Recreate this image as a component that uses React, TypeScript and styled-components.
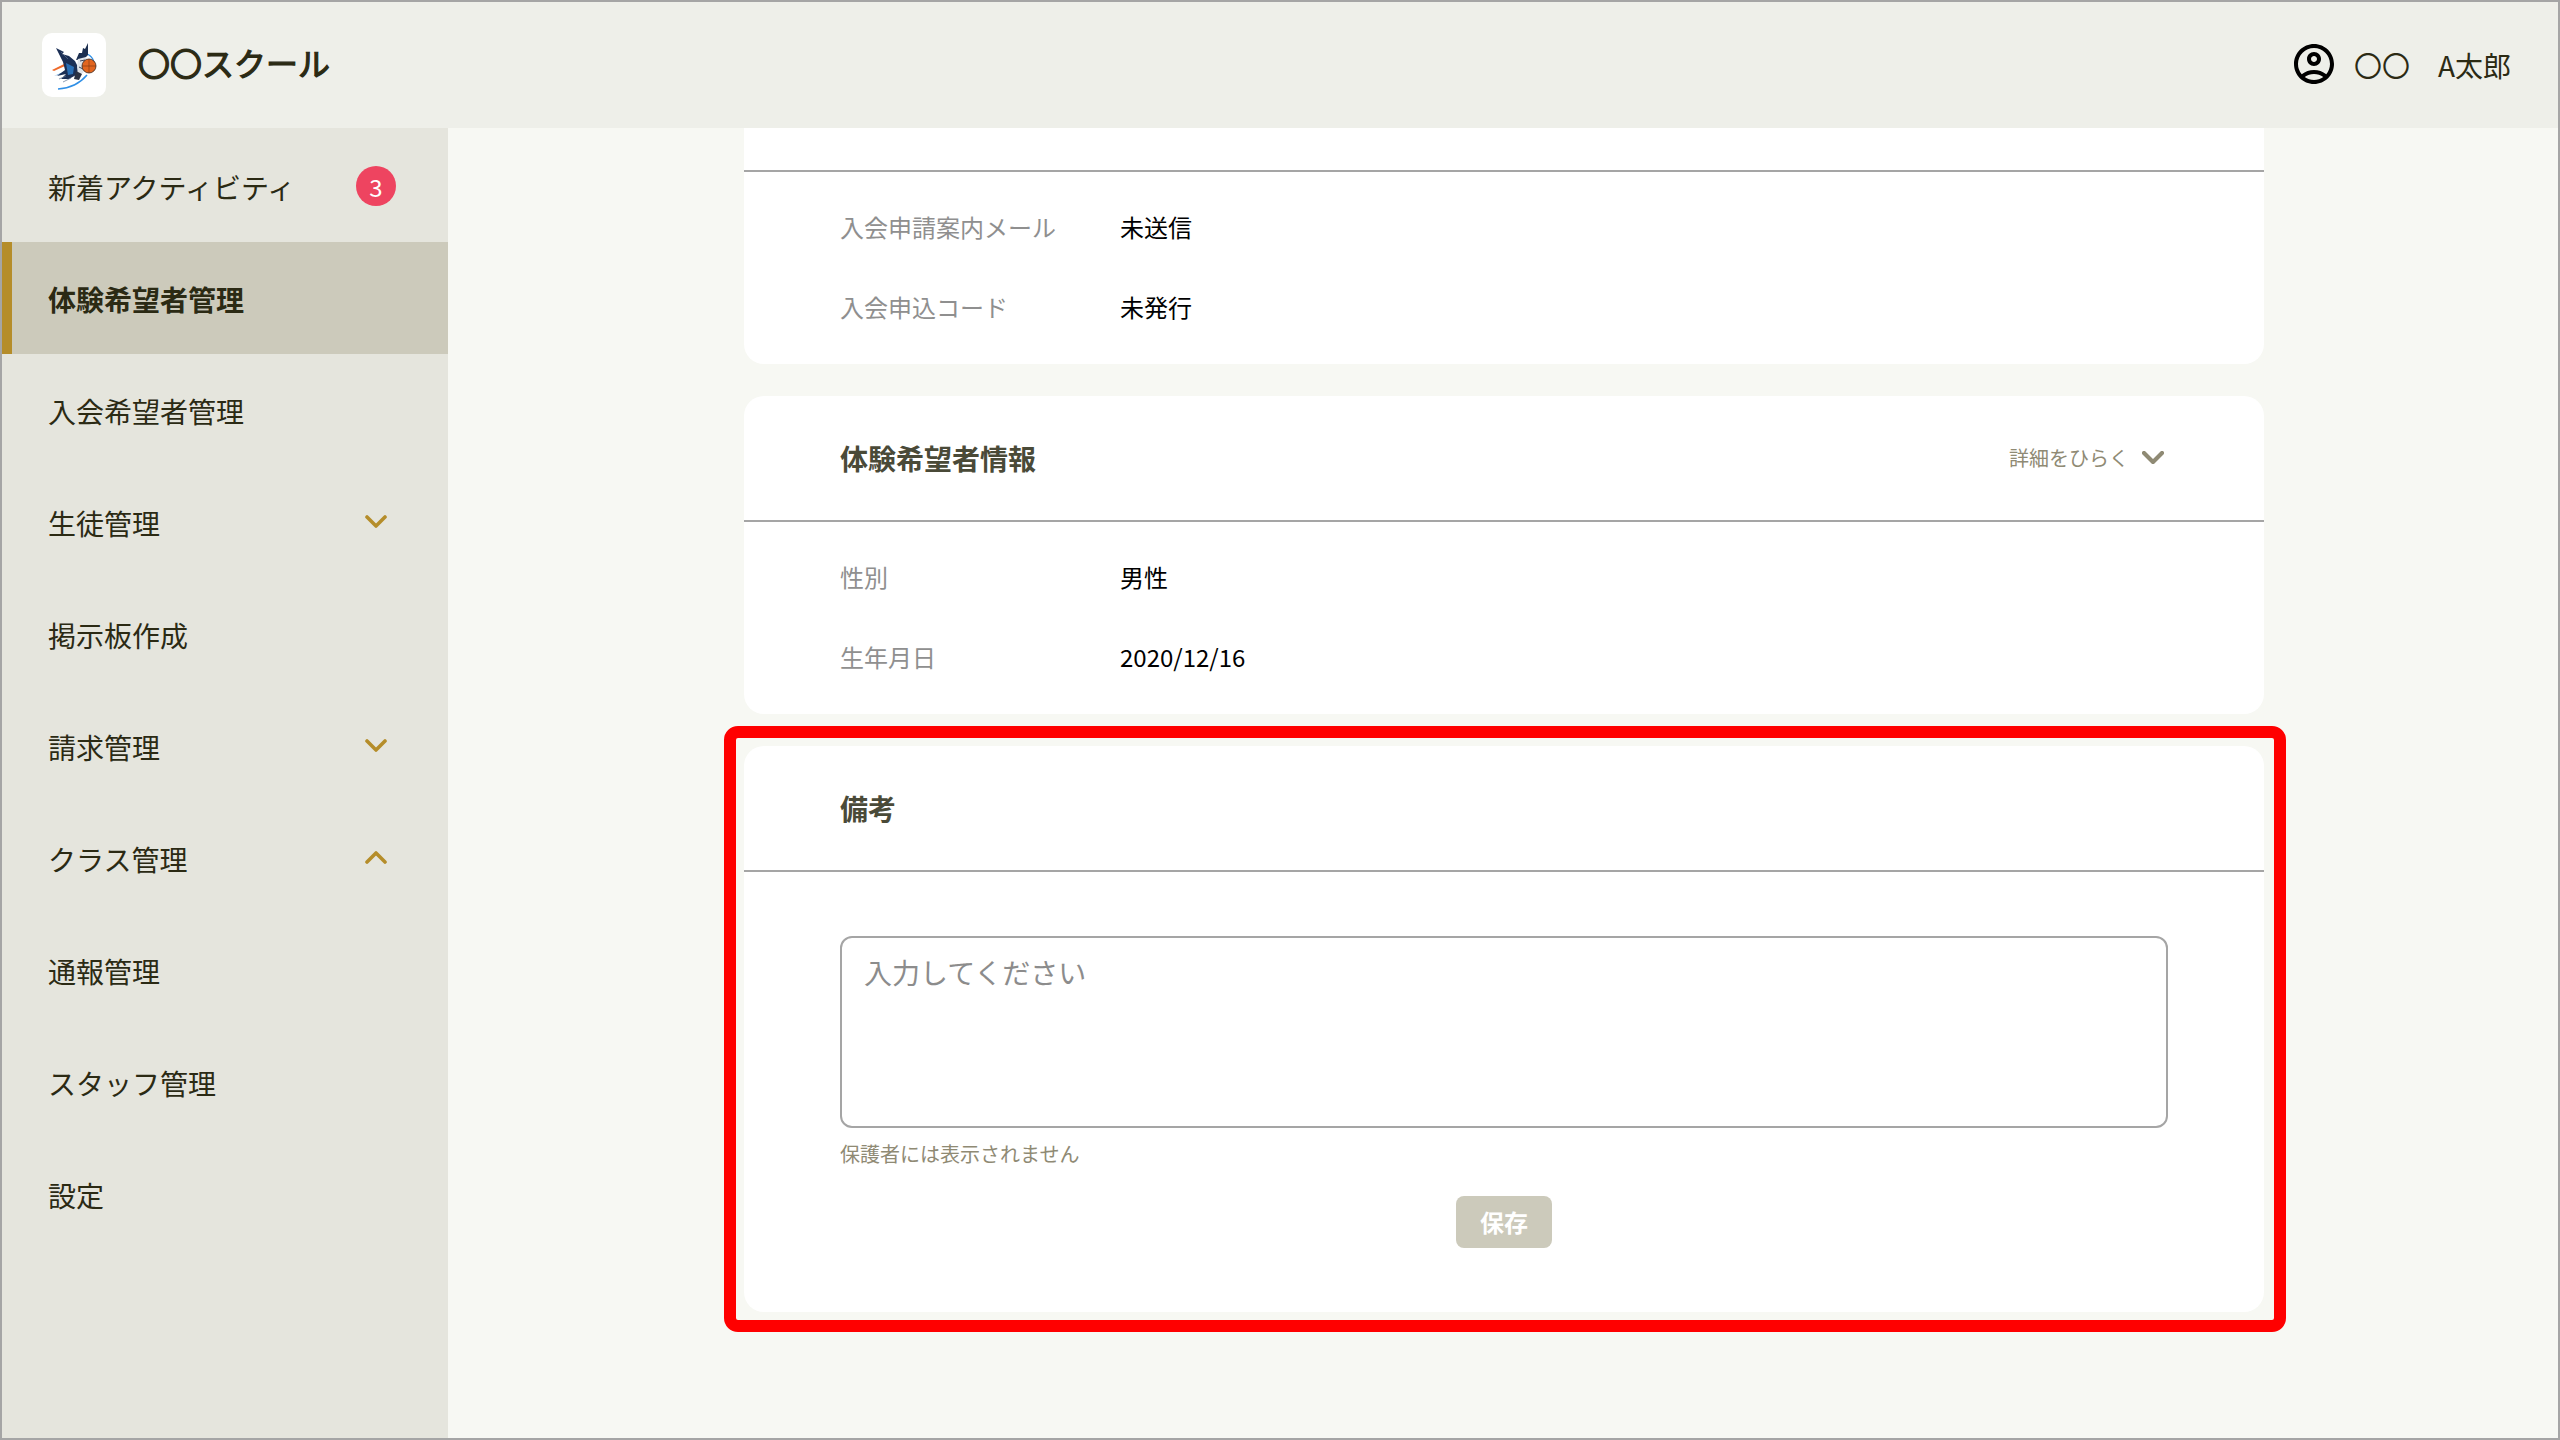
import styled, { createGlobalStyle } from 'styled-components'
import { MdOutlineAccountCircle } from 'react-icons/md'

const GlobalStyle = createGlobalStyle`
    html, body {
        margin: 0;
        padding: 0;
        background: #f7f8f3;
    }
    * {
        box-sizing: border-box;
    }
`

type NavEntry = {
    label: string
    active?: boolean
    badge?: number
    chevron?: 'up' | 'down'
}

const navItems: NavEntry[] = [
    { label: '新着アクティビティ', badge: 3 },
    { label: '体験希望者管理', active: true },
    { label: '入会希望者管理' },
    { label: '生徒管理', chevron: 'down' },
    { label: '掲示板作成' },
    { label: '請求管理', chevron: 'down' },
    { label: 'クラス管理', chevron: 'up' },
    { label: '通報管理' },
    { label: 'スタッフ管理' },
    { label: '設定' },
]

const Logo = () => (
    <LogoBox>
        <svg width="64" height="64" viewBox="0 0 64 64">
            <path d="M43 20 Q54 24 52 36" fill="none" stroke="#2f8fe6" strokeWidth="1.3" />
            <path d="M16 56 Q34 55 45 42" fill="none" stroke="#2f8fe6" strokeWidth="1.5" />
            <path d="M10 37 L24 30 L23 33 L12 38 Z" fill="#ef6a2a" />
            <path d="M12 43 L26 37 L25 39 Z" fill="#2f7fd0" />
            <path d="M14 15 L22 19 L20 21 L27 23 L33 28 L37 36 L34 42 L27 46 L19 46 L24 41 L15 43 L23 37 L21 29 Z" fill="#1b2f55" />
            <path d="M19 19 L26 26 M17 46 L24 43 M21 49 L29 45" stroke="#5f7391" strokeWidth="0.7" />
            <path d="M24 30 L32 34 L31 41 L26 42 Z" fill="#2a6fb5" />
            <path d="M46 10 L46 22 L42 26 L34 27 L37 20 L40 20 L41 15 L43 16 Z" fill="#1c2f50" />
            <path d="M36 26 L44 24 L46 30 L41 40 L36 42 L35 34 Z" fill="#dfe3e8" />
            <path d="M38 28 L43 27 M37 34 L41 36" stroke="#39445c" strokeWidth="1" />
            <path d="M34 38 L40 41 L37 47 L32 46 Z" fill="#2b3243" />
            <circle cx="47" cy="33" r="7" fill="#e2651f" stroke="#3a2a22" strokeWidth="0.8" />
            <path d="M40 33 H54 M47 26 V40" stroke="#7a3410" strokeWidth="0.6" />
        </svg>
    </LogoBox>
)

const Chevron = ({ dir, color, stroke = 3.6 }: { dir: 'up' | 'down'; color: string; stroke?: number }) => (
    <svg width="22" height="13" viewBox="0 0 22 13">
        <path
            d={dir === 'down' ? 'M2 2 L11 11 L20 2' : 'M2 11 L11 2 L20 11'}
            fill="none"
            stroke={color}
            strokeWidth={stroke}
            strokeLinecap="round"
            strokeLinejoin="round"
        />
    </svg>
)

const App = () => {
    return (
        <Page>
            <GlobalStyle />
            <Header>
                <Brand>
                    <Logo />
                    <SchoolName>〇〇スクール</SchoolName>
                </Brand>
                <UserArea>
                    <UserIcon>
                        <MdOutlineAccountCircle size={48} color="#000" />
                    </UserIcon>
                    <UserName>
                        <span>〇〇</span>
                        <span>A太郎</span>
                    </UserName>
                </UserArea>
            </Header>
            <Body>
                <Sidebar>
                    {navItems.map((item) => (
                        <NavItem key={item.label} $active={item.active}>
                            <NavLabel>{item.label}</NavLabel>
                            {item.badge ? <Badge>{item.badge}</Badge> : null}
                            {item.chevron ? (
                                <ChevronSlot>
                                    <Chevron dir={item.chevron} color="#b58d2a" />
                                </ChevronSlot>
                            ) : null}
                        </NavItem>
                    ))}
                </Sidebar>
                <Main>
                    <Card $clipped>
                        <CardHeader $clipped />
                        <InfoList>
                            <InfoRow>
                                <InfoLabel>入会申請案内メール</InfoLabel>
                                <InfoValue>未送信</InfoValue>
                            </InfoRow>
                            <InfoRow>
                                <InfoLabel>入会申込コード</InfoLabel>
                                <InfoValue>未発行</InfoValue>
                            </InfoRow>
                        </InfoList>
                    </Card>
                    <Card>
                        <CardHeader>
                            <CardTitle>体験希望者情報</CardTitle>
                            <DetailToggle>
                                詳細をひらく
                                <Chevron dir="down" color="#8f8a74" stroke={4.2} />
                            </DetailToggle>
                        </CardHeader>
                        <InfoList>
                            <InfoRow>
                                <InfoLabel>性別</InfoLabel>
                                <InfoValue>男性</InfoValue>
                            </InfoRow>
                            <InfoRow>
                                <InfoLabel>生年月日</InfoLabel>
                                <InfoValue>2020/12/16</InfoValue>
                            </InfoRow>
                        </InfoList>
                    </Card>
                    <Card>
                        <Highlight />
                        <CardHeader>
                            <CardTitle>備考</CardTitle>
                        </CardHeader>
                        <MemoBody>
                            <MemoInput placeholder="入力してください" />
                            <MemoNote>保護者には表示されません</MemoNote>
                            <SaveButton type="button">保存</SaveButton>
                        </MemoBody>
                    </Card>
                </Main>
            </Body>
        </Page>
    )
}

const Page = styled.div`
    display: flex;
    flex-direction: column;
    width: 2560px;
    height: 1440px;
    border: 2px solid #a5a5a5;
    overflow: hidden;
    background: #f7f8f3;
    font-family: 'Noto Sans CJK JP', 'Noto Sans', sans-serif;
    color: #2b2a14;
`

const Header = styled.header`
    display: flex;
    align-items: center;
    justify-content: space-between;
    flex: 0 0 126px;
    padding: 0 47px 0 40px;
    background: #eeefe9;
`

const Brand = styled.div`
    display: flex;
    align-items: center;
    gap: 32px;
`

const LogoBox = styled.div`
    display: flex;
    width: 64px;
    height: 64px;
    border-radius: 10px;
    background: #fff;
`

const SchoolName = styled.div`
    padding-bottom: 6px;
    font-size: 32px;
    font-weight: 400;
    line-height: 48px;
    -webkit-text-stroke: 1.2px #2b2a14;
`

const UserArea = styled.div`
    display: flex;
    align-items: center;
    gap: 16px;
`

const UserIcon = styled.div`
    display: flex;
    padding-bottom: 2px;
`

const UserName = styled.div`
    display: flex;
    gap: 28px;
    font-size: 28px;
    line-height: 42px;
`

const Body = styled.div`
    display: flex;
    flex: 1;
    min-height: 0;
`

const Sidebar = styled.nav`
    display: flex;
    flex-direction: column;
    flex: 0 0 446px;
    padding-top: 2px;
    background: #e5e5dd;
`

const NavItem = styled.div<{ $active?: boolean }>`
    display: flex;
    align-items: center;
    justify-content: space-between;
    flex: 0 0 112px;
    padding: 0 52px 0 ${(p) => (p.$active ? '36px' : '46px')};
    border-left: ${(p) => (p.$active ? '10px solid #b58d2a' : 'none')};
    background: ${(p) => (p.$active ? '#cccabb' : 'transparent')};
    font-size: 28px;
    font-weight: ${(p) => (p.$active ? 700 : 400)};
`

const NavLabel = styled.span`
    padding-top: 1px;
`

const Badge = styled.div`
    display: flex;
    align-items: center;
    justify-content: center;
    width: 40px;
    height: 40px;
    border-radius: 50%;
    background: #ee4460;
    color: #fff;
    font-size: 24px;
`

const ChevronSlot = styled.div`
    display: flex;
    align-items: center;
    justify-content: center;
    width: 40px;
    height: 40px;
    padding-bottom: 2px;
`

const Main = styled.main`
    display: flex;
    flex-direction: column;
    flex: 1;
    gap: 32px;
    padding-left: 296px;
    overflow: hidden;
`

const Card = styled.section<{ $clipped?: boolean }>`
    position: relative;
    flex: none;
    width: 1520px;
    border-radius: ${(p) => (p.$clipped ? '0 0 20px 20px' : '20px')};
    background: #fff;
`

const CardHeader = styled.div<{ $clipped?: boolean }>`
    display: flex;
    align-items: center;
    justify-content: space-between;
    height: ${(p) => (p.$clipped ? '44px' : '126px')};
    padding: 0 100px 0 96px;
    border-bottom: 2px solid #a5a5a5;
`

const CardTitle = styled.h2`
    margin: 0;
    font-size: 28px;
    font-weight: 700;
    line-height: 42px;
    color: #4a4a38;
`

const DetailToggle = styled.div`
    display: flex;
    align-items: center;
    gap: 13px;
    font-size: 20px;
    line-height: 30px;
    color: #8f8a74;
    svg {
        margin-bottom: 2px;
    }
`

const InfoList = styled.div`
    display: flex;
    flex-direction: column;
    gap: 40px;
    padding: 34px 96px 38px;
`

const InfoRow = styled.div`
    display: flex;
    align-items: center;
    height: 40px;
    font-size: 24px;
`

const InfoLabel = styled.div`
    flex: 0 0 280px;
    color: #8f8f8f;
`

const InfoValue = styled.div`
    color: #000;
`

const MemoBody = styled.div`
    display: flex;
    flex-direction: column;
    padding: 64px 96px;
`

const MemoInput = styled.textarea`
    display: block;
    width: 100%;
    height: 192px;
    padding: 13px 22px;
    border: 2px solid #a5a5a5;
    border-radius: 12px;
    background: #fff;
    resize: none;
    outline: none;
    font-family: inherit;
    font-size: 28px;
    line-height: 42px;
    &::placeholder {
        color: #8c8c8c;
        opacity: 1;
    }
`

const MemoNote = styled.div`
    margin-top: 11px;
    font-size: 20px;
    line-height: 30px;
    color: #8f8a74;
`

const SaveButton = styled.button`
    align-self: center;
    width: 96px;
    height: 52px;
    margin-top: 27px;
    padding: 0 0 2px;
    border: none;
    border-radius: 8px;
    background: #cccabb;
    color: #fff;
    font-family: inherit;
    font-size: 24px;
    font-weight: 700;
`

const Highlight = styled.div`
    position: absolute;
    top: -20px;
    right: -22px;
    bottom: -20px;
    left: -20px;
    border: 12px solid #ff0000;
    border-radius: 14px;
    pointer-events: none;
`

export default App
